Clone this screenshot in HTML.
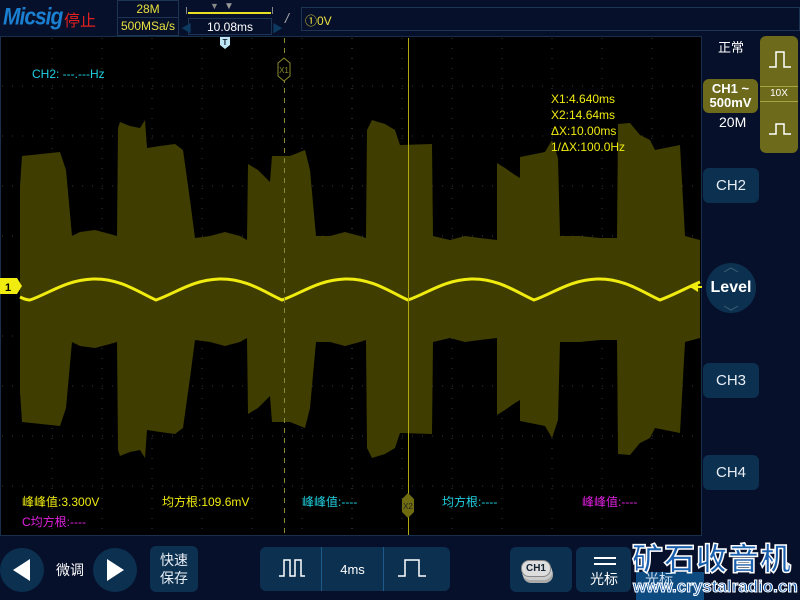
<!DOCTYPE html>
<html><head><meta charset="utf-8"><style>
*{margin:0;padding:0;box-sizing:border-box}
body{width:800px;height:600px;background:#07102a;position:relative;overflow:hidden;font-family:"Liberation Sans","Noto Sans CJK SC",sans-serif;color:#fff}
.abs{position:absolute}
.btn{position:absolute;background:#0c3050;border-radius:6px;display:flex;align-items:center;justify-content:center;color:#e8eef5}
</style></head><body>
<!-- top bar -->
<div class="abs" style="left:3px;top:4px;font:italic bold 21px 'Liberation Sans',sans-serif;color:#1a7fd0;letter-spacing:-1px;transform:scaleY(1.15);transform-origin:top left">Micsig</div>
<div class="abs" style="left:64px;top:7px;font-size:16px;color:#e02020">停止</div>
<div class="abs" style="left:117px;top:0;width:62px;height:36px;border:1px solid #1d3553"></div>
<div class="abs" style="left:117px;top:17px;width:62px;height:1px;background:#1d3553"></div>
<div class="abs" style="left:117px;top:2px;width:62px;text-align:center;font-size:12px;color:#e8e040">28M</div>
<div class="abs" style="left:117px;top:19px;width:62px;text-align:center;font-size:12px;color:#e8e040">500MSa/s</div>
<div class="abs" style="left:186px;top:7px;width:87px;height:7px;border-left:1px solid #888;border-right:1px solid #888"></div>
<div class="abs" style="left:188px;top:12px;width:83px;height:2px;background:#e8e020"></div>
<div class="abs" style="left:210px;top:1px;color:#888;font-size:9px">▼</div>
<div class="abs" style="left:224px;top:1px;color:#999;font-size:10px">▼</div>
<div class="abs" style="left:188px;top:18px;width:84px;height:17px;border:1px solid #1d3553;text-align:center;font-size:12px;line-height:16px">10.08ms</div>
<div class="abs" style="left:181px;top:20px;color:#0d3a60;font-size:11px">◀</div>
<div class="abs" style="left:272px;top:20px;color:#0d3a60;font-size:11px">▶</div>
<div class="abs" style="left:285px;top:10px;color:#aaa;font-size:14px;font-style:italic">/</div>
<div class="abs" style="left:301px;top:7px;width:499px;height:24px;border:1px solid #1d3553;font-size:12px;color:#e8e040;padding:4px 0 0 3px">①0V</div>

<!-- plot -->
<svg class="abs" style="left:0;top:36px" width="702" height="500" viewBox="0 36 702 500">
<rect x="0" y="36" width="702" height="500" fill="#000"/>
<rect x="0.5" y="36.5" width="701" height="499" fill="none" stroke="#16304c"/>
<g stroke="#3a3a3a" stroke-width="1" stroke-dasharray="1,9">
<line x1="2" y1="86" x2="700" y2="86"/><line x1="2" y1="136" x2="700" y2="136"/><line x1="2" y1="186" x2="700" y2="186"/><line x1="2" y1="236" x2="700" y2="236"/><line x1="2" y1="286" x2="700" y2="286"/><line x1="2" y1="336" x2="700" y2="336"/><line x1="2" y1="386" x2="700" y2="386"/><line x1="2" y1="436" x2="700" y2="436"/><line x1="2" y1="486" x2="700" y2="486"/>
<line x1="52" y1="38" x2="52" y2="535"/><line x1="102" y1="38" x2="102" y2="535"/><line x1="152" y1="38" x2="152" y2="535"/><line x1="202" y1="38" x2="202" y2="535"/><line x1="252" y1="38" x2="252" y2="535"/><line x1="302" y1="38" x2="302" y2="535"/><line x1="352" y1="38" x2="352" y2="535" stroke="#555"/><line x1="402" y1="38" x2="402" y2="535"/><line x1="452" y1="38" x2="452" y2="535"/><line x1="502" y1="38" x2="502" y2="535"/><line x1="552" y1="38" x2="552" y2="535"/><line x1="602" y1="38" x2="602" y2="535"/><line x1="652" y1="38" x2="652" y2="535"/>
</g>
<polygon fill="#3f3d00" points="20,186 22,156 60,152 66,170 72,236 80,232 95,230 110,234 117,236 118,128 120,122 130,126 140,128 145,120 147,148 160,146 175,144 183,150 190,200 195,238 210,236 225,232 240,236 247,240 248,164 258,170 270,182 272,156 290,156 305,150 310,170 316,236 330,236 345,232 360,236 366,238 367,130 372,120 385,124 395,130 400,145 432,144 433,236 450,240 465,236 480,238 497,240 497,163 505,168 515,175 520,178 520,157 545,152 552,140 558,158 560,236 580,236 600,238 617,238 618,124 630,123 640,135 650,140 655,150 680,145 685,236 700,240 700,338 685,342 680,433 655,428 650,438 640,443 630,455 618,454 617,340 600,340 580,342 560,342 558,420 552,438 545,426 520,421 520,400 515,403 505,410 497,415 497,338 480,340 465,342 450,338 433,342 432,434 400,433 395,448 385,454 372,458 367,448 366,340 360,342 345,346 330,342 316,342 310,408 305,428 290,422 272,422 270,396 258,408 248,414 247,338 240,342 225,346 210,342 195,340 190,378 183,428 175,434 160,432 147,430 145,458 140,450 130,452 120,456 118,450 117,342 110,344 95,348 80,346 72,342 66,408 60,426 22,422 20,392"/>
<path d="M20,297 C24,299 27,300 30,300 C50,293 66,280 93,279 S140,293 156,300 C176,293 192,280 219,279 S266,293 282,300 C302,293 318,280 345,279 S392,293 408,300 C428,293 444,280 471,279 S518,293 534,300 C554,293 570,280 597,279 S644,293 660,300 C676,294 690,286 700,282" fill="none" stroke="#f0ec10" stroke-width="3"/>
<line x1="284.5" y1="38" x2="284.5" y2="535" stroke="#8a8a30" stroke-dasharray="5,5"/>
<line x1="408.5" y1="38" x2="408.5" y2="535" stroke="#b0aa10"/>
<polygon points="284,58 290,63 290,76 284,81 278,76 278,63" fill="#000" stroke="#8a8a30"/>
<text x="284" y="73" font-size="8" fill="#8a8a30" text-anchor="middle" font-family="Liberation Sans">X1</text>
<polygon points="408,493 414,499 414,512 408,518 402,512 402,499" fill="#6f6b10"/>
<text x="408" y="509" font-size="8" fill="#222" text-anchor="middle" font-family="Liberation Sans">X2</text>
<path d="M220,37 h10 v8 l-5,4 l-5,-4z" fill="#bfe8f4"/>
<text x="225" y="45" font-size="8" fill="#123" text-anchor="middle" font-weight="bold" font-family="Liberation Sans">T</text>
<path d="M0,278 h17 l5,8 l-5,8 h-17z" fill="#f0ec10"/>
<text x="5" y="291" font-size="11" font-weight="bold" fill="#000" font-family="Liberation Sans">1</text>
<path d="M690,287 l8,-5 v10z" fill="#f0ec10"/><line x1="690" y1="287" x2="702" y2="287" stroke="#f0ec10" stroke-width="2"/>
</svg>
<div class="abs" style="left:32px;top:67px;font-size:12px;color:#20d0e0">CH2: ---.---Hz</div>
<div class="abs" style="left:551px;top:91px;font-size:12px;color:#f0ec10;line-height:16px">X1:4.640ms<br>X2:14.64ms<br>ΔX:10.00ms<br>1/ΔX:100.0Hz</div>
<div class="abs" style="left:22px;top:493px;font-size:12px;color:#f0ec10">峰峰值:3.300V</div>
<div class="abs" style="left:162px;top:493px;font-size:12px;color:#f0ec10">均方根:109.6mV</div>
<div class="abs" style="left:302px;top:493px;font-size:12px;color:#20d0e0">峰峰值:----</div>
<div class="abs" style="left:442px;top:493px;font-size:12px;color:#20d0e0">均方根:----</div>
<div class="abs" style="left:582px;top:493px;font-size:12px;color:#e020e0">峰峰值:----</div>
<div class="abs" style="left:22px;top:513px;font-size:12px;color:#e020e0">C均方根:----</div>

<!-- right panel -->
<div class="abs" style="left:718px;top:37px;font-size:13px">正常</div>
<div class="abs" style="left:760px;top:36px;width:38px;height:117px;background:#6e6a1c;border-radius:6px"></div>
<div class="abs" style="left:760px;top:86px;width:38px;height:1px;background:#a8a440"></div>
<div class="abs" style="left:760px;top:101px;width:38px;height:1px;background:#a8a440"></div>
<div class="abs" style="left:760px;top:88px;width:38px;text-align:center;font-size:10px">10X</div>
<svg class="abs" style="left:768px;top:50px" width="24" height="90"><path d="M1,17 h7 v-15 h8 v15 h7" fill="none" stroke="#fff" stroke-width="1.5"/><path d="M1,84 h7 v-10 h8 v10 h7" fill="none" stroke="#fff" stroke-width="1.5"/></svg>
<div class="abs" style="left:703px;top:79px;width:55px;height:34px;background:#6e6a1c;border-radius:6px;text-align:center;font-weight:bold;font-size:13px;line-height:14px;padding-top:3px">CH1 ~<br>500mV</div>
<div class="abs" style="left:719px;top:114px;font-size:14px">20M</div>
<div class="btn" style="left:703px;top:168px;width:56px;height:35px;font-size:15px">CH2</div>
<div class="abs" style="left:706px;top:263px;width:50px;height:50px;border-radius:50%;background:#0c3050;text-align:center;font-size:16px;font-weight:bold;line-height:50px">Level</div>
<svg class="abs" style="left:721px;top:266px" width="20" height="46"><path d="M3,6 l7,-4 l7,4 M3,40 l7,4 l7,-4" fill="none" stroke="#3c6078" stroke-width="1"/></svg>
<div class="btn" style="left:703px;top:363px;width:56px;height:35px;font-size:15px">CH3</div>
<div class="btn" style="left:703px;top:455px;width:56px;height:35px;font-size:15px">CH4</div>

<!-- bottom bar -->
<div class="abs" style="left:0;top:548px;width:44px;height:44px;border-radius:50%;background:#0c3050"></div>
<div class="abs" style="left:13px;top:559px;width:0;height:0;border-top:11px solid transparent;border-bottom:11px solid transparent;border-right:17px solid #fff"></div>
<div class="abs" style="left:56px;top:560px;font-size:14px">微调</div>
<div class="abs" style="left:93px;top:548px;width:44px;height:44px;border-radius:50%;background:#0c3050"></div>
<div class="abs" style="left:107px;top:559px;width:0;height:0;border-top:11px solid transparent;border-bottom:11px solid transparent;border-left:17px solid #fff"></div>
<div class="btn" style="left:150px;top:546px;width:48px;height:46px;font-size:14px;line-height:18px;text-align:center">快速<br>保存</div>
<div class="btn" style="left:260px;top:547px;width:190px;height:44px"></div>
<div class="abs" style="left:321px;top:547px;width:1px;height:44px;background:#1d5a8a"></div>
<div class="abs" style="left:383px;top:547px;width:1px;height:44px;background:#1d5a8a"></div>
<svg class="abs" style="left:275px;top:558px" width="160" height="22"><path d="M4,18 h5 v-16 h6 v16 h5 v-16 h6 v16 h4" fill="none" stroke="#fff" stroke-width="1.5"/><path d="M123,18 h7 v-16 h14 v16 h7" fill="none" stroke="#fff" stroke-width="1.5"/></svg>
<div class="abs" style="left:322px;top:562px;width:61px;text-align:center;font-size:13px">4ms</div>
<div class="btn" style="left:510px;top:547px;width:62px;height:45px"></div>
<div class="abs" style="left:521px;top:560px;width:30px;height:17px;border-radius:8px;background:#ddd;border:1px solid #888;box-shadow:1px 3px 0 #ccc,2px 6px 0 #aaa;font-size:10px;font-weight:bold;color:#123;text-align:center;line-height:15px">CH1</div>
<div class="btn" style="left:576px;top:547px;width:55px;height:45px"></div>
<div class="abs" style="left:594px;top:557px;width:22px;height:2px;background:#fff"></div>
<div class="abs" style="left:594px;top:563px;width:22px;height:2px;background:#fff"></div>
<div class="abs" style="left:590px;top:569px;font-size:14px">光标</div>
<div class="abs" style="left:636px;top:572px;width:68px;height:28px;background:#0c4a80"></div>
<div class="abs" style="left:645px;top:569px;font-size:14px;color:#cde">光标</div>
<div class="abs" style="left:632px;top:534px;font-size:31px;font-weight:bold;color:#1a5fae;-webkit-text-stroke:1.5px #fff;letter-spacing:1px">矿石收音机</div>
<div class="abs" style="left:633px;top:577px;font-size:17px;font-weight:bold;color:#1a5fae;-webkit-text-stroke:1px #fff">www.crystalradio.cn</div>
</body></html>
